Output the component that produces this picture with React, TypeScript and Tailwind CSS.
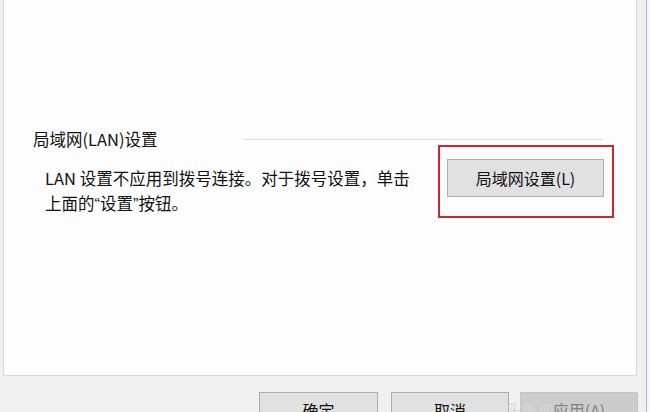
import React from 'react';

// ---------------------------------------------------------------------------
// Windows "Internet 属性 > 连接" fragment: LAN settings group
// ---------------------------------------------------------------------------

const FONT = { fontFamily: '"Noto Sans CJK SC", "Noto Sans", sans-serif' };
const QUOTE = { fontFamily: '"Liberation Sans", sans-serif' };

function DialogButton({ label, disabled = false, className = '' }: { label: string; disabled?: boolean; className?: string }) {
  return (
    <button
      disabled={disabled}
      className={`flex h-[36px] items-center justify-center border text-[16px] leading-none ${
        disabled
          ? 'border-[#c4c4c4] bg-[#cccccc] text-[#838383]'
          : 'border-[#adadad] bg-[#e1e1e1] text-[#111]'
      } ${className}`}
    >
      {label}
    </button>
  );
}

export default function App() {
  return (
    <div style={FONT} className="relative flex h-[412px] w-[650px] overflow-hidden bg-[#f0f0f0]">
      <div className="flex w-[646px] shrink-0 flex-col pl-[3px] pr-[9px]">
        {/* Tab page panel */}
        <div className="h-[376px] shrink-0 border-x border-b border-[#d9d9d9] bg-[#fdfdfd]">
          {/* Group header */}
          <div className="flex items-center pt-[128px]">
            <span className="pl-[29px] text-[16.5px] leading-[22px] text-[#111]">局域网(LAN)设置</span>
            <div className="ml-auto mr-[33px] h-px w-[360px] bg-[#d3dde3]" />
          </div>

          {/* Group body */}
          <div className="flex items-start">
            <p className="mt-[16px] pl-[41px] text-[16.5px] leading-[25px] text-[#111]">
              LAN 设置不应用到拨号连接。对于拨号设置，单击
              <br />
              上面的<span style={QUOTE}>“</span>设置<span style={QUOTE}>”</span>按钮。
            </p>
            <div className="-mt-[5px] ml-auto mr-[22px] h-[73px] w-[176px] shrink-0 border-2 border-[#d4242b] pl-[7px] pt-[12px]">
              <DialogButton label="局域网设置(L)" className="h-[38px] w-[157px]" />
            </div>
          </div>
        </div>

        {/* Dialog buttons */}
        <div className="flex pt-[16px]">
          <DialogButton label="确定" className="ml-[256px] w-[119px] shrink-0" />
          <DialogButton label="取消" className="ml-[13px] w-[118px] shrink-0" />
          <DialogButton label="应用(A)" disabled className="ml-[11px] w-[118px] shrink-0" />
        </div>
      </div>

      {/* Window frame edge */}
      <div className="w-px shrink-0 bg-[#a9bccf]" />
      <div className="flex-1 bg-[#f6f7f9]" />

      {/* Watermark */}
      <span className="absolute left-[506px] top-[401px] text-[15px] leading-none text-[#d6d6d6]">头条 @</span>
    </div>
  );
}
